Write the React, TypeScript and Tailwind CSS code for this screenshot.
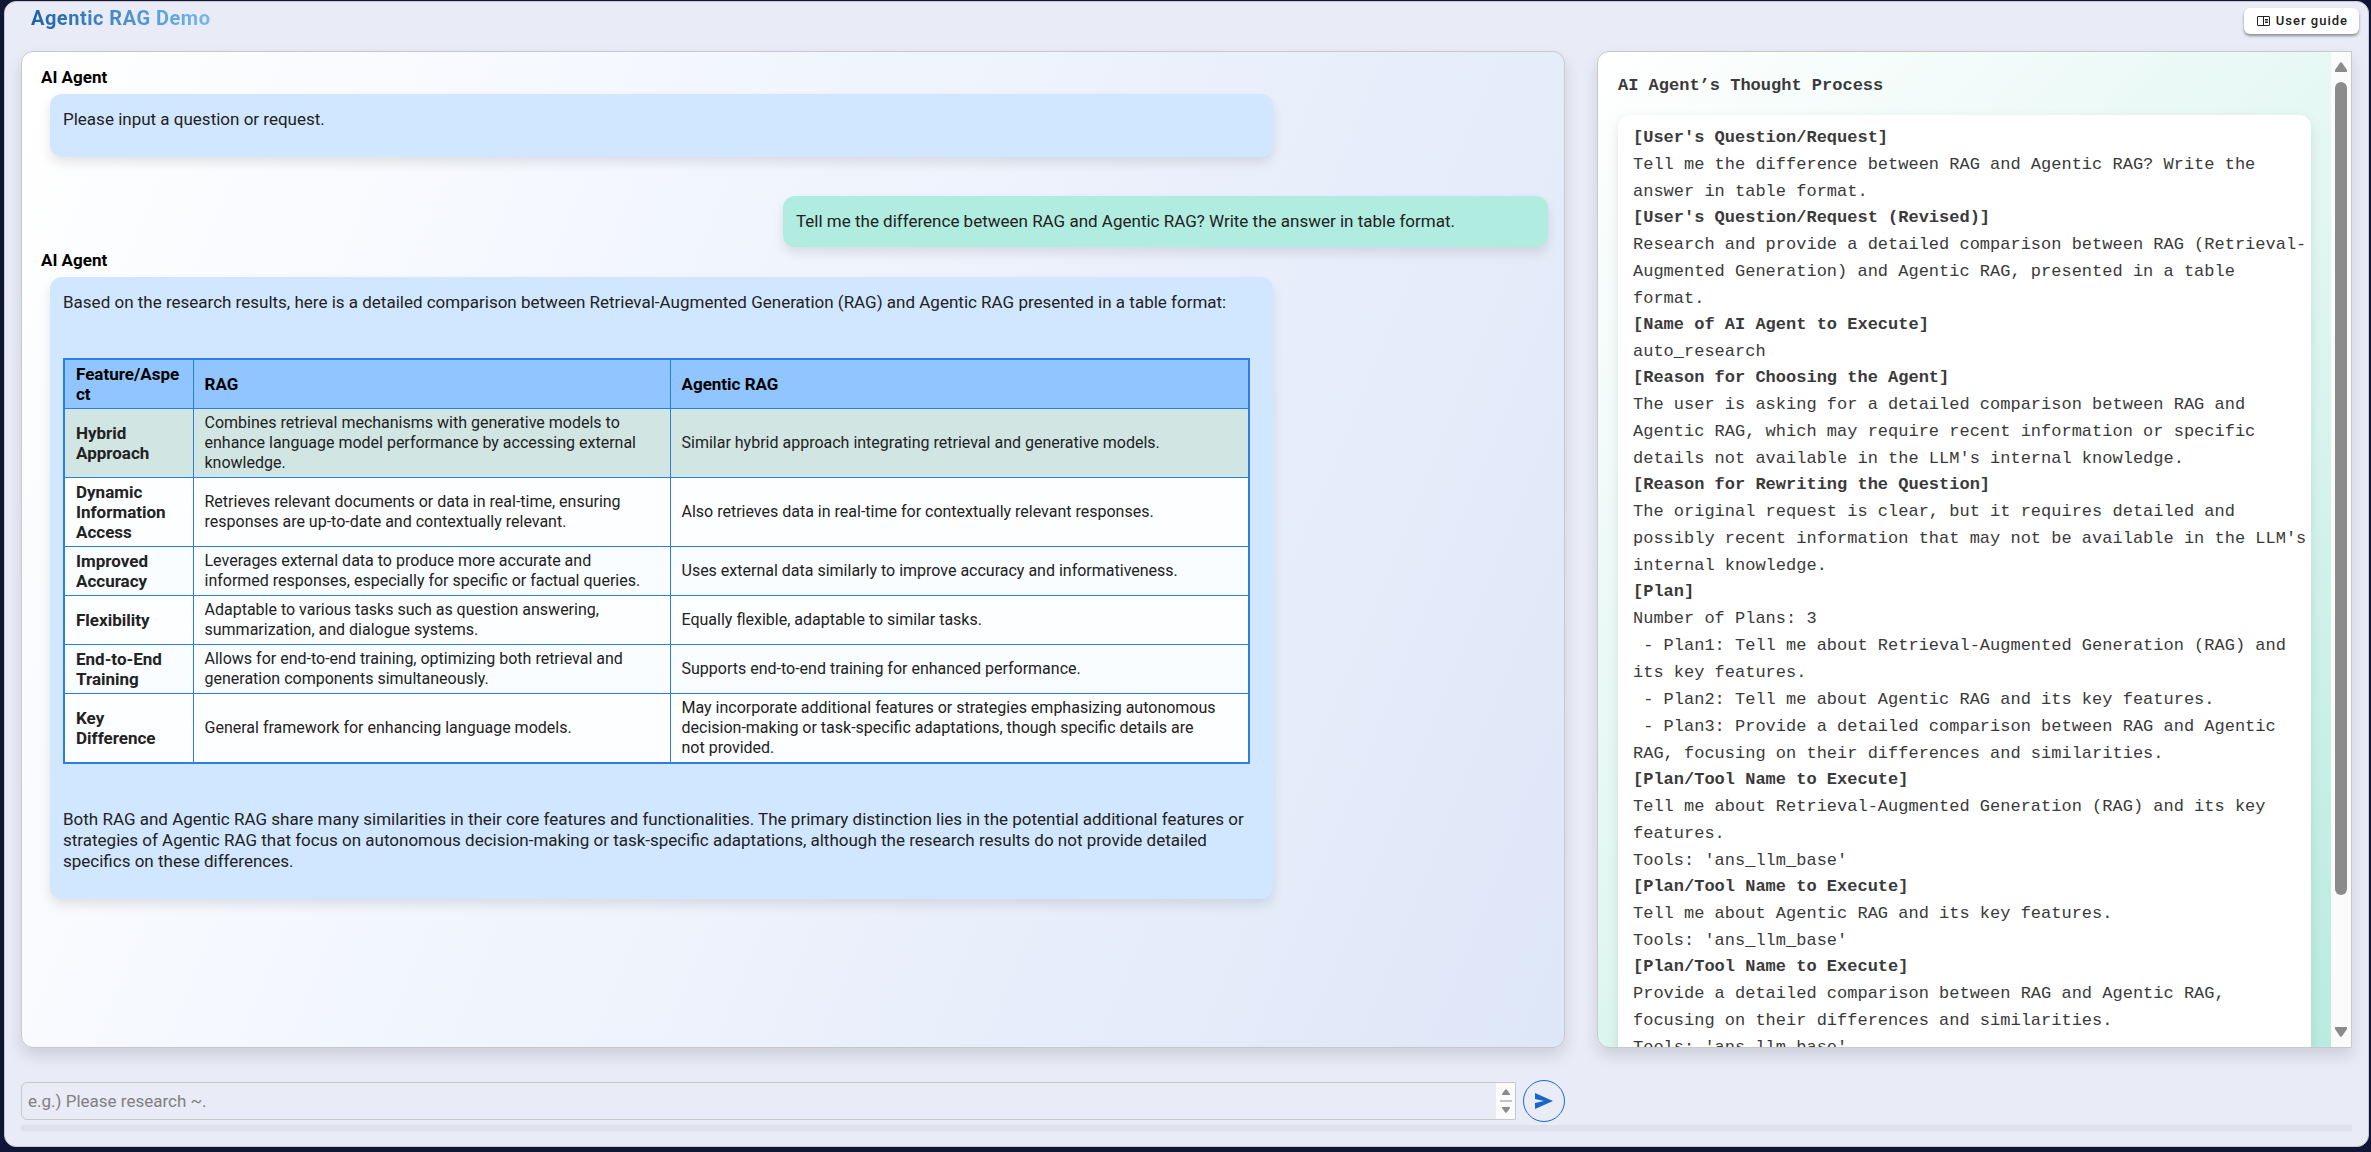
import type { ReactNode } from 'react'

const features = [
  ['Hybrid Approach', 'Combines retrieval mechanisms with generative models to enhance language model performance by accessing external knowledge.', 'Similar hybrid approach integrating retrieval and generative models.'],
  ['Dynamic Information Access', 'Retrieves relevant documents or data in real-time, ensuring responses are up-to-date and contextually relevant.', 'Also retrieves data in real-time for contextually relevant responses.'],
  ['Improved Accuracy', 'Leverages external data to produce more accurate and informed responses, especially for specific or factual queries.', 'Uses external data similarly to improve accuracy and informativeness.'],
  ['Flexibility', 'Adaptable to various tasks such as question answering, summarization, and dialogue systems.', 'Equally flexible, adaptable to similar tasks.'],
  ['End-to-End Training', 'Allows for end-to-end training, optimizing both retrieval and generation components simultaneously.', 'Supports end-to-end training for enhanced performance.'],
  ['Key Difference', 'General framework for enhancing language models.', 'May incorporate additional features or strategies emphasizing autonomous decision-making or task-specific adaptations, though specific details are not\u00a0provided.'],
]

const thoughts: { title: string; lines: string[] }[] = [
  { title: "[User's Question/Request]", lines: ['Tell me the difference between RAG and Agentic RAG? Write the answer in table format.'] },
  { title: "[User's Question/Request (Revised)]", lines: ['Research and provide a detailed comparison between RAG (Retrieval-Augmented Generation) and Agentic RAG, presented in a table format.'] },
  { title: '[Name of AI Agent to Execute]', lines: ['auto_research'] },
  { title: '[Reason for Choosing the Agent]', lines: ["The user is asking for a detailed comparison between RAG and Agentic RAG, which may require recent information or specific details not available in the LLM's internal knowledge."] },
  { title: '[Reason for Rewriting the Question]', lines: ["The original request is clear, but it requires detailed and possibly recent information that may not be available in the LLM's internal knowledge."] },
  {
    title: '[Plan]',
    lines: [
      'Number of Plans: 3',
      ' - Plan1: Tell me about Retrieval-Augmented Generation (RAG) and its key features.',
      ' - Plan2: Tell me about Agentic RAG and its key features.',
      ' - Plan3: Provide a detailed comparison between RAG and Agentic RAG, focusing on their differences and similarities.',
    ],
  },
  { title: '[Plan/Tool Name to Execute]', lines: ['Tell me about Retrieval-Augmented Generation (RAG) and its key features.', "Tools: 'ans_llm_base'"] },
  { title: '[Plan/Tool Name to Execute]', lines: ['Tell me about Agentic RAG and its key features.', "Tools: 'ans_llm_base'"] },
  { title: '[Plan/Tool Name to Execute]', lines: ['Provide a detailed comparison between RAG and Agentic RAG, focusing on their differences and similarities.', "Tools: 'ans_llm_base'"] },
]

function Arrow({ down = false }: { down?: boolean }) {
  return (
    <svg aria-hidden="true" width="12" height="10" viewBox="0 0 12 10" className="shrink-0 fill-[#8b8b8b]">
      {down ? <path d="M0 0h12v2L7 9.200Q6 10.500 5 9.200L0 2z" /> : <path d="M0 10h12V8L7 .8Q6-.5 5 .8L0 8z" />}
    </svg>
  )
}

function AgentMessage({ children }: { children: ReactNode }) {
  return (
    <article>
      <h2 className="pt-px pl-[3px] leading-6 font-bold text-black">AI Agent</h2>
      <div className="mt-[5px] ml-3 w-[81%] rounded-xl bg-[#d1e7ff] px-[13px] pt-[15px] pb-[27px] shadow-[0_6px_12px_rgba(0,0,0,0.1)]">{children}</div>
    </article>
  )
}

function ComparisonTable() {
  const cell = 'border border-[#2b7fe0] px-[11px] py-1'
  return (
    <table className="my-[45px] w-[calc(100%-10px)] table-fixed border-collapse border-2 border-[#2b7fe0] text-left leading-5">
      <colgroup>
        <col className="w-[129px]" />
        <col className="w-[477px]" />
        <col />
      </colgroup>
      <thead className="bg-[#90c5ff] text-black">
        <tr>
          <th scope="col" className={`${cell} font-bold break-words`}>Feature/Aspect</th>
          <th scope="col" className={`${cell} font-bold`}>RAG</th>
          <th scope="col" className={`${cell} font-bold`}>Agentic RAG</th>
        </tr>
      </thead>
      <tbody>
        {features.map(([name, rag, agentic], i) => (
          <tr key={name} className={i === 0 ? 'bg-[#d1e5e3]' : i % 2 ? 'bg-[#fdfeff]' : 'bg-[#f9fdff]'}>
            <th scope="row" className={`${cell} font-bold`}>{name}</th>
            <td className={`${cell} text-base leading-5`}>{rag}</td>
            <td className={`${cell} text-base leading-5`}>{agentic}</td>
          </tr>
        ))}
      </tbody>
    </table>
  )
}

export default function App() {
  return (
    <div className="flex h-screen flex-col bg-[#111536] pt-px pr-0.5 pb-[5px] pl-1 font-['Roboto',sans-serif] text-[17px] text-[#222]">
      <div className="flex min-h-0 flex-1 flex-col rounded-xl border border-[#c8c8cc] bg-[#e9ebf7] px-4 pb-[15px]">
        <header className="-mr-[7px] flex h-[49px] shrink-0 items-start justify-between pl-2.5">
          <h1 className="bg-gradient-to-r from-[#1c63a5] to-[#74b9ee] bg-clip-text pt-1 text-xl leading-6 font-bold tracking-wide text-transparent">Agentic RAG Demo</h1>
          <button type="button" className="mt-1.5 flex h-[26px] items-center gap-1.5 rounded-md bg-white pr-[11px] pl-[13px] text-[13px] font-medium tracking-[1px] text-[#222] shadow-[0_2px_3px_rgba(0,0,0,0.4)]">
            <svg aria-hidden="true" width="13" height="10" viewBox="0 0 13 10" fill="none" stroke="currentColor">
              <rect x=".5" y=".5" width="12" height="9" rx=".5" />
              <path d="M6.500.5v9" />
              <path d="M8 3.500h3M8 5h3M8 6.500h3" />
            </svg>
            User guide
          </button>
        </header>

        <main className="grid min-h-0 flex-1 grid-cols-[1544fr_755fr] gap-8">
          <section aria-label="Conversation" className="min-h-0 overflow-hidden rounded-xl border border-[#c8c8cc] bg-[linear-gradient(112deg,#ffffff_0%,#f1f5fd_42%,#dee7f8_100%)] px-4 pt-3 shadow-[0_8px_16px_rgba(0,0,0,0.12)]">
            <AgentMessage>
              <p className="leading-[21px]">Please input a question or request.</p>
            </AgentMessage>
            <div className="mt-[39px] ml-auto w-[765px] max-w-full rounded-xl bg-[#b0ecdf] px-[13px] py-[15px] leading-[21px] shadow-[0_6px_12px_rgba(0,0,0,0.1)]">
              Tell me the difference between RAG and Agentic RAG? Write the answer in table format.
            </div>
            <AgentMessage>
              <p className="leading-[21px]">Based on the research results, here is a detailed comparison between Retrieval-Augmented Generation (RAG) and Agentic RAG presented in a table format:</p>
              <ComparisonTable />
              <p className="leading-[21px]">Both RAG and Agentic RAG share many similarities in their core features and functionalities. The primary distinction lies in the potential additional features or strategies of Agentic RAG that focus on autonomous decision-making or task-specific adaptations, although the research results do not provide detailed specifics on these differences.</p>
            </AgentMessage>
          </section>

          <section aria-label="Thought process" className="flex min-h-0 overflow-hidden rounded-l-xl border border-[#c8c8cc] bg-[linear-gradient(135deg,#ffffff_0%,#e2f7f2_50%,#b8ebdf_100%)] font-['Liberation_Mono',monospace] text-[17px] text-[#3a3a3a] shadow-[0_8px_16px_rgba(0,0,0,0.12)]">
            <div className="min-w-0 flex-1 px-5 pt-5">
              <h2 className="leading-7 font-bold">AI Agent’s Thought Process</h2>
              <div className="mt-[15px] rounded-xl bg-white pt-2.5 pr-0.5 pb-5 pl-[15px] leading-[27px] shadow-[0_4px_12px_rgba(0,0,0,0.1)]">
                {thoughts.map((t, i) => (
                  <div key={i}>
                    <h3 className="leading-[26px] font-bold">{t.title}</h3>
                    {t.lines.map((line) => (
                      <p key={line} className="whitespace-pre-wrap">{line}</p>
                    ))}
                  </div>
                ))}
              </div>
            </div>
            <div className="flex w-5 shrink-0 flex-col items-center bg-[#fbfbfb] py-2.5">
              <Arrow />
              <div className="flex w-full flex-1 justify-center py-2.5">
                <div className="h-[87%] w-3 rounded-full bg-[#8b8b8b]" />
              </div>
              <Arrow down />
            </div>
          </section>
        </main>

        <footer className="mt-8 shrink-0">
          <form className="grid grid-cols-[1544fr_755fr] gap-8" onSubmit={(e) => e.preventDefault()}>
            <div className="flex items-center gap-[7px]">
              <div className="flex h-[38px] min-w-0 flex-1 overflow-hidden rounded-l-md border border-[#c8c8cc]">
                <textarea aria-label="Question or request" rows={1} placeholder="e.g.) Please research ~." className="min-w-0 flex-1 resize-none overflow-hidden bg-transparent px-1.5 py-1.5 leading-6 outline-none placeholder:text-[#808080]" />
                <div className="flex w-[19px] flex-col items-center justify-between bg-[#fbfbfb] py-1.5">
                  <svg aria-hidden="true" width="12" height="24" viewBox="0 0 12 24" className="fill-[#8b8b8b]">
                    <path d="M2 6h8V5L7 .7Q6-.4 5 .7L2 5zM0 11.500h12v1H0zM2 18h8v1L7 23.300Q6 24.400 5 23.300L2 19z" />
                  </svg>
                </div>
              </div>
              <button type="submit" aria-label="Send" className="flex size-[42px] shrink-0 items-center justify-center rounded-full border border-[#1b6ac9] text-[#1967c5]">
                <svg aria-hidden="true" width="18" height="16" viewBox="0 0 18 16" fill="currentColor">
                  <path d="M0 0l18 8L0 16v-6l9-2-9-2z" />
                </svg>
              </button>
            </div>
          </form>
          <div className="mt-[3px] h-1.5 bg-[#dfe2ec]" />
        </footer>
      </div>
    </div>
  )
}
